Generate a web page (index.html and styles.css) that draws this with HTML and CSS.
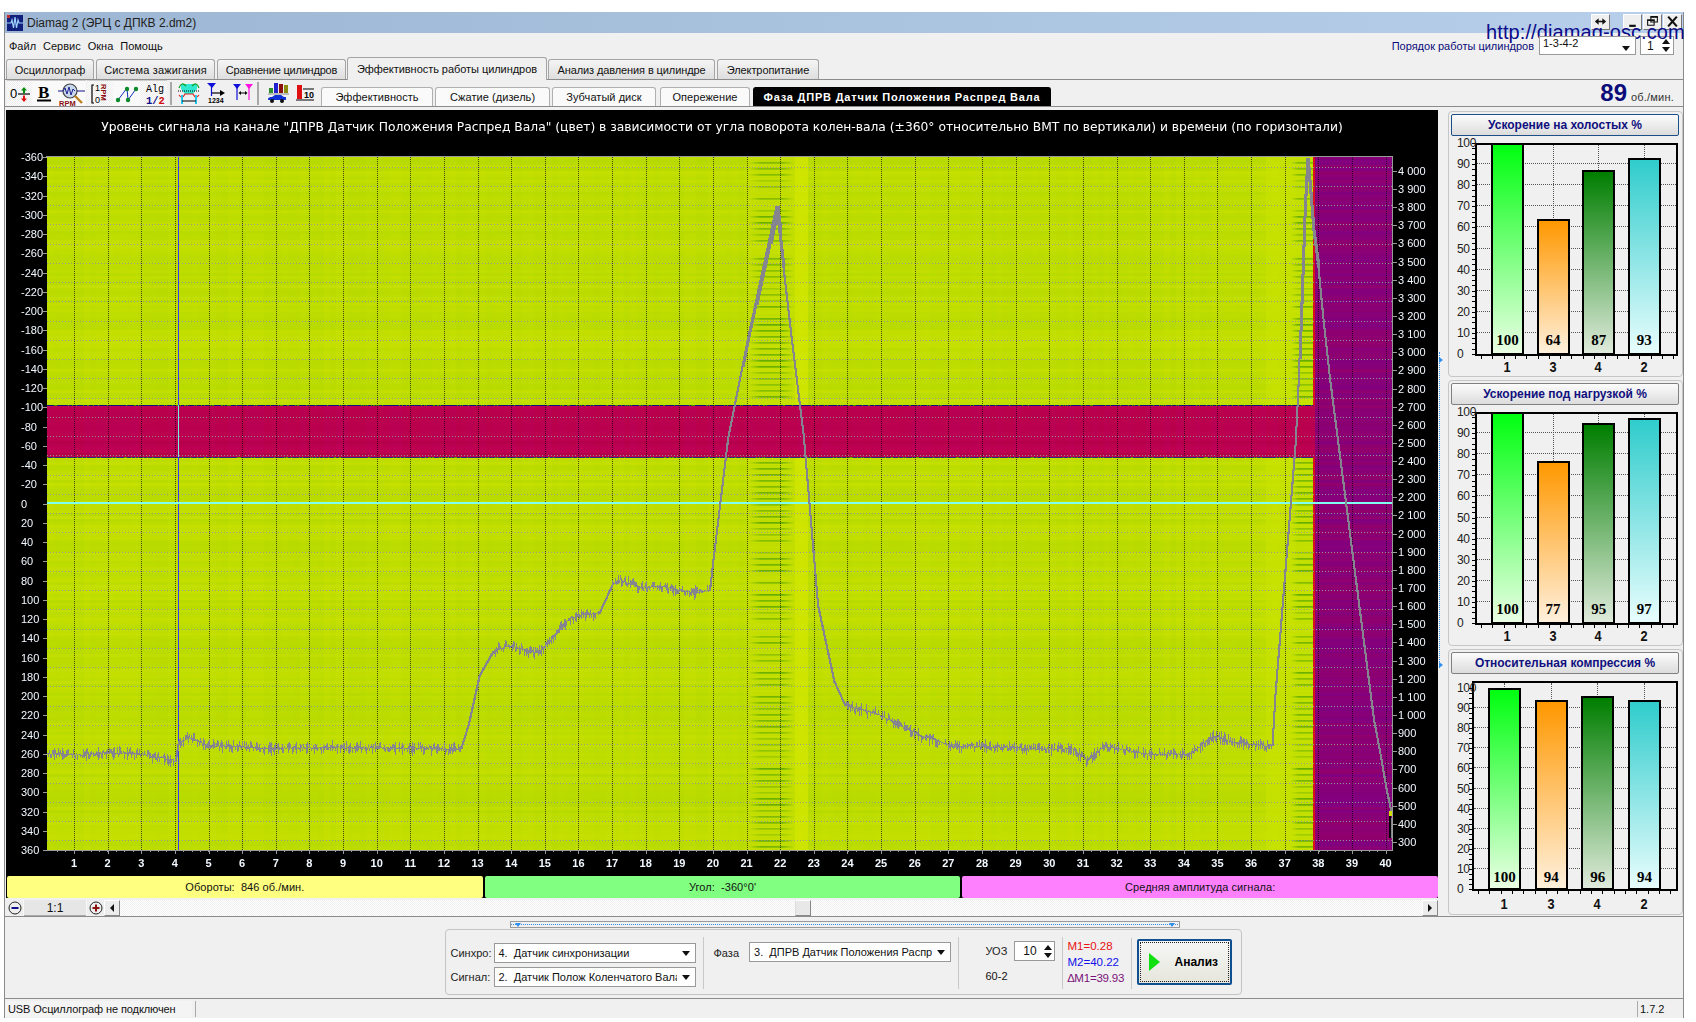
FILE: index.html
```html
<!DOCTYPE html>
<html lang="ru">
<head>
<meta charset="utf-8">
<title>Diamag 2</title>
<link rel="stylesheet" href="styles.css">
</head>
<body>
<div class="window">
  <header class="titlebar">
    <svg class="appicon" viewBox="0 0 16 16"><rect width="16" height="16" fill="#10207c"/><rect x="0" y="0" width="3" height="3" fill="#c03030"/><path d="M0 8h4l1-3 1.5 8L8 2l1.5 11L11 5l1 3h4" fill="none" stroke="#9fd0ff" stroke-width="1.2"/></svg>
    <span class="apptitle">Diamag 2 (ЭРЦ с ДПКВ 2.dm2)</span>
    <div class="winbtns">
      <button class="winbtn"><svg viewBox="0 0 14 12" class="wi"><path d="M2 6h10" stroke="#111" stroke-width="1.6"/><path d="M1 6l4-3.500v7zM13 6l-4-3.500v7z" fill="#111"/></svg></button>
      <span class="winbtn-gap"></span>
      <button class="winbtn"><svg viewBox="0 0 12 12" class="wi"><rect x="3" y="9" width="6" height="2" fill="#111"/></svg></button>
      <button class="winbtn"><svg viewBox="0 0 12 12" class="wi"><path d="M4.500 1.500h6v5h-6zM1.500 4.500h6v5h-6z" fill="#eee" stroke="#111"/><path d="M4 2h7M1 5h7" stroke="#111"/></svg></button>
      <button class="winbtn"><svg viewBox="0 0 12 12" class="wi"><path d="M2 1.500l8 9M10 1.500l-8 9" stroke="#111" stroke-width="2"/></svg></button>
    </div>
  </header>
  <div class="url">http://diamag-osc.com</div>

  <nav class="menubar">
    <ul class="menu"><li>Файл</li><li>Сервис</li><li>Окна</li><li>Помощь</li></ul>
    <div class="order">
      <span class="order-label">Порядок работы цилиндров</span>
      <div class="combo combo-order"><span class="combo-text">1-3-4-2</span><i class="caret"></i></div>
      <div class="spin spin-order"><span>1</span><span class="spin-arrows"><i class="up"></i><i class="down"></i></span></div>
    </div>
  </nav>

  <div class="tabs">
    <div class="tab t1">Осциллограф</div>
    <div class="tab t2">Система зажигания</div>
    <div class="tab t3">Сравнение цилиндров</div>
    <div class="tab t4 active">Эффективность работы цилиндров</div>
    <div class="tab t5">Анализ давления в цилиндре</div>
    <div class="tab t6">Электропитание</div>
  </div>

  <div class="toolbar">
    <div class="tool-group">
      <button class="tool hatch w25"><svg viewBox="0 0 26 24" class="ic"><text x="3" y="16" class="it">0</text><path d="M11 12h12" stroke="#000" stroke-width="1.200"/><path d="M17 5l3 3.500h-2v3h-2v-3h-2z" fill="#0a8a0a"/><path d="M17 20l3-3.500h-2v-3h-2v3h-2z" fill="#e01010"/></svg></button>
      <button class="tool w24"><svg viewBox="0 0 26 24" class="ic"><text x="7" y="16" class="ib">B</text><rect x="6" y="17.500" width="14" height="2" fill="#000"/></svg></button>
      <button class="tool w30"><svg viewBox="0 0 30 24" class="ic2"><circle cx="14" cy="9" r="7" fill="#c8d8ec" stroke="#444" stroke-width="1.200"/><path d="M2 9h5M21 9h8" stroke="#10108a" stroke-width="1.200"/><path d="M7 9l2-3 2 6 2-7 2 8 2-6 2 2" fill="none" stroke="#202090"/><path d="M19 14l7 7" stroke="#c08020" stroke-width="2.400"/><text x="3" y="23.500" class="irpm">RPM</text></svg></button>
    </div>
    <div class="tool-group">
      <button class="tool hatch w26"><svg viewBox="0 0 26 24" class="ic"><path d="M7 3H5v18h2" fill="none" stroke="#000" stroke-width="1.200"/><text x="8" y="9" class="it9">1</text><text x="8" y="21" class="it9">0</text><text transform="translate(14 2) rotate(90)" class="irpm">RPM</text></svg></button>
      <button class="tool w27"><svg viewBox="0 0 26 24" class="ic"><path d="M4 18l9-12 1 12 8-11" fill="none" stroke="#1030c0" stroke-width="1"/><circle cx="4" cy="18" r="2.200" fill="#0a8a2a"/><circle cx="13" cy="7" r="2.200" fill="#0a8a2a"/><circle cx="14" cy="18" r="2.200" fill="#0a8a2a"/><circle cx="22" cy="7" r="2.200" fill="#0a8a2a"/></svg></button>
      <button class="tool hatch w27"><svg viewBox="0 0 26 24" class="ic"><text x="5" y="10" class="it10">Alg</text><text x="5" y="22" class="it10b"><tspan fill="#10108a">1/</tspan><tspan fill="#d01010">2</tspan></text></svg></button>
    </div>
    <span class="tsep s-a"></span>
    <div class="tool-group plain">
      <button class="tool"><svg viewBox="0 0 26 24" class="ic"><path d="M5 3h16v5l-4 5H9L5 8z" fill="#30e8d0"/><path d="M3 7c2-5 4-5 7-2M23 7c-2-5-4-5-7-2" fill="none" stroke="#10a020" stroke-width="1.200"/><path d="M2 10h22" stroke="#000" stroke-dasharray="1 1"/><path d="M3 14c2 3 4 3 6-1l8 0c2 4 4 4 6 1" fill="none" stroke="#e02020" stroke-width="1.200"/><path d="M6 14v9M20 14v9" stroke="#20c8f0" stroke-width="2"/><path d="M6 20h14" stroke="#000"/></svg></button>
      <button class="tool"><svg viewBox="0 0 26 24" class="ic"><path d="M4 2h9l-4 5z" fill="#1010d8"/><path d="M8.500 5v10" stroke="#1010d8" stroke-width="1.200"/><path d="M9 12h10" stroke="#000" stroke-width="1.200"/><path d="M17 9l5 3-5 3z" fill="#000"/><text x="5" y="22" class="it8">1234</text></svg></button>
      <button class="tool"><svg viewBox="0 0 26 24" class="ic"><path d="M3 3h8l-4 5z" fill="#1010d8"/><path d="M7 6v13" stroke="#1010d8" stroke-width="1.200"/><path d="M15 3h8l-4 5z" fill="#ff10e0"/><path d="M19 6v13" stroke="#ff10e0" stroke-width="1.200"/><path d="M10 12h6" stroke="#000"/><path d="M8.500 12l2.500-2v4zM17.500 12l-2.500-2v4z" fill="#000"/></svg></button>
    </div>
    <span class="tsep s-b"></span>
    <div class="tool-group plain">
      <button class="tool"><svg viewBox="0 0 26 24" class="ic"><rect x="4" y="7" width="4" height="5" fill="#2f8f2f"/><rect x="9" y="2" width="4" height="10" fill="#2020d0"/><rect x="14" y="3" width="4" height="9" fill="#8a1010"/><rect x="19" y="4" width="4" height="8" fill="#8a8a10"/><path d="M3 13h21" stroke="#888"/><path d="M3 19c0-3 2-3 4-3l3-2h6l3 2h2v3z" fill="#1030d8"/><circle cx="7" cy="20" r="2" fill="#111"/><circle cx="17" cy="20" r="2" fill="#111"/></svg></button>
      <button class="tool"><svg viewBox="0 0 26 24" class="ic"><rect x="5" y="4" width="5" height="14" fill="#e01010"/><path d="M4 19h18M11 8h11" stroke="#000" stroke-width="1.200"/><text x="12" y="17" class="it9b">10</text></svg></button>
    </div>
    <div class="subtabs">
      <div class="subtab s1">Эффективность</div>
      <div class="subtab s2">Сжатие (дизель)</div>
      <div class="subtab s3">Зубчатый диск</div>
      <div class="subtab s4">Опережение</div>
      <div class="subtab s5 on">Фаза ДПРВ Датчик Положения Распред Вала</div>
    </div>
    <div class="rpm"><b>89</b><span>об./мин.</span></div>
  </div>

  <main class="main">
    <section class="scopepane">
      <div class="blackpanel">
        <div class="scope" id="scope">
          <canvas id="plot" width="1432" height="766"></canvas>
          <div class="scope-title">Уровень сигнала на канале "ДПРВ Датчик Положения Распред Вала" (цвет) в зависимости от угла поворота колен-вала (±360° относительно ВМТ по вертикали) и времени (по горизонтали)</div>
        </div>
        <div class="infobars">
          <div class="info yellow">Обороты:&nbsp; 846 об./мин.</div>
          <div class="info green">Угол:&nbsp; -360°0'</div>
          <div class="info pink">Средняя амплитуда сигнала:</div>
        </div>
      </div>
      <div class="scrollrow">
        <button class="zoombtn"><svg viewBox="0 0 14 14"><circle cx="7" cy="7" r="6" fill="#eee" stroke="#222"/><rect x="3.500" y="6" width="7" height="2" fill="#10108a"/></svg></button>
        <div class="ratio">1:1</div>
        <button class="zoombtn"><svg viewBox="0 0 14 14"><circle cx="7" cy="7" r="6" fill="#eee" stroke="#222"/><path d="M3.500 6H6V3.500h2V6h2.500v2H8v2.500H6V8H3.500z" fill="#8a1010"/></svg></button>
        <button class="sbtn"><i class="tri-l"></i></button>
        <div class="strack"><div class="sthumb"></div></div>
        <button class="sbtn"><i class="tri-r"></i></button>
      </div>
    </section>

    <div class="vsplit"><i class="va"></i><i class="va"></i></div>

    <aside class="side">
      <section class="group"><h3 class="gtitle first">Ускорение на холостых %</h3><div class="bchart" data-vals="100,64,87,93"></div></section>
      <section class="group"><h3 class="gtitle">Ускорение под нагрузкой %</h3><div class="bchart" data-vals="100,77,95,97"></div></section>
      <section class="group"><h3 class="gtitle">Относительная компрессия %</h3><div class="bchart tall" data-vals="100,94,96,94"></div></section>
    </aside>
  </main>

  <section class="bottom">
    <div class="hsplit"><i class="ha"></i><i class="ha"></i></div>
    <div class="panel">
      <div class="psec p1">
        <div class="prow"><label>Синхро:</label><div class="combo cw"><span class="combo-text">4.  Датчик синхронизации</span><i class="caret"></i></div></div>
        <div class="prow"><label>Сигнал:</label><div class="combo cw"><span class="combo-text">2.  Датчик Полож Коленчатого Вала</span><i class="caret"></i></div></div>
      </div>
      <div class="psec p2">
        <label>Фаза</label>
        <div class="combo cw"><span class="combo-text">3.  ДПРВ Датчик Положения Распред Вала</span><i class="caret"></i></div>
      </div>
      <div class="psec p3">
        <div class="uoz"><label>УОЗ</label><div class="spin spin-uoz"><span>10</span><span class="spin-arrows"><i class="up"></i><i class="down"></i></span></div></div>
        <div class="teeth">60-2</div>
      </div>
      <div class="psec p4">
        <div class="m1">M1=0.28</div>
        <div class="m2">M2=40.22</div>
        <div class="m3">∆M1=39.93</div>
      </div>
      <div class="psec p5">
        <button class="analyze"><i class="play"></i><span>Анализ</span></button>
      </div>
    </div>
  </section>

  <footer class="status">
    <div class="scell sc-a">USB Осциллограф не подключен</div>
    <div class="scell sc-b"></div>
    <div class="scell sc-c">1.7.2</div>
  </footer>
</div>
<script src="script.js"></script>
</body>
</html>
```

FILE: styles.css
```css
* { box-sizing: border-box; }
html, body { margin: 0; padding: 0; background: #fff; }
body { width: 1696px; height: 1022px; overflow: hidden; font: 11px "Liberation Sans", Arial, sans-serif; color: #111; }
button { font: inherit; margin: 0; padding: 0; }

.window { position: relative; margin: 12px 0 0 4px; width: 1680px; height: 1006px; background: #f0f0f0; display: flex; flex-direction: column; border-left: 1px solid #8a8a8a; border-right: 1px solid #8a8a8a; }

.titlebar { height: 21px; flex: none; display: flex; align-items: center; padding: 0 1px 0 2px; background: linear-gradient(90deg, #9cb6d3, #b7cfea); }
.appicon { width: 16px; height: 16px; flex: none; }
.apptitle { margin-left: 4px; font-size: 12px; color: #222; }
.winbtns { margin-left: auto; display: flex; margin-top: -2px; height: 16px; gap: 1px; }
.winbtn { width: 19px; height: 16px; background: #efefef; border: 1px solid #aaa; border-color: #fff #777 #777 #fff; }
.winbtn-gap { width: 11px; }
.wi { width: 13px; height: 13px; display: block; margin: 0 auto; }
.url { position: absolute; left: 1481px; top: 9px; font-size: 20px; color: #0b0b8a; white-space: nowrap; letter-spacing: .1px; }

.menubar { height: 23px; flex: none; display: flex; justify-content: space-between; align-items: flex-start; }
.menu { list-style: none; margin: 7px 0 0 4px; padding: 0; display: flex; gap: 7px; font-size: 11px; }
.order { display: flex; align-items: center; margin: 3px 9px 0 0; }
.order-label { color: #0b0b7a; font-size: 11px; margin-right: 5px; }
.combo { position: relative; display: flex; align-items: center; background: #fff; border: 1px solid #999; overflow: hidden; }
.combo-text { white-space: pre; overflow: hidden; flex: 1; padding-left: 4px; }
.caret { flex: none; width: 0; height: 0; margin: 0 5px 0 5px; border: 4px solid transparent; border-top: 5px solid #111; border-bottom: 0; }
.combo-order { width: 97px; height: 19px; align-items: flex-start; }
.combo-order .combo-text { padding-left: 3px; }
.combo-order .caret { margin-top: 9px; }
.spin { display: flex; align-items: center; justify-content: space-between; background: #fff; border: 1px solid #999; }
.spin-order { width: 34px; height: 19px; margin-left: 4px; padding: 0 3px 0 6px; font-size: 12px; }
.spin-arrows { display: flex; flex-direction: column; gap: 3px; }
.up, .down { display: block; width: 0; height: 0; border: 4px solid transparent; }
.up { border-bottom: 5px solid #111; border-top: 0; }
.down { border-top: 5px solid #111; border-bottom: 0; }

.tabs { height: 24px; flex: none; display: flex; align-items: flex-end; padding-left: 1px; gap: 2px; border-bottom: 1px solid #8c8c8c; font-size: 11px; letter-spacing: .15px; }
.tab { height: 20px; display: flex; align-items: center; justify-content: center; background: linear-gradient(#f5f5f5, #dedede); border: 1px solid #a5a5a5; border-bottom: 0; border-radius: 3px 3px 0 0; white-space: nowrap; }
.tab.active { height: 23px; background: #f0f0f0; margin-bottom: -1px; letter-spacing: -.05px; }
.t1 { width: 88px; letter-spacing: -.05px; } .t2 { width: 119px; } .t3 { width: 129px; letter-spacing: -.2px; } .t4 { width: 200px; margin-left: -1px; margin-right: -1px; } .t5 { width: 167px; letter-spacing: -.1px; } .t6 { width: 102px; letter-spacing: -.1px; }

.toolbar { height: 27px; flex: none; display: flex; align-items: flex-start; border-bottom: 1px solid #8c8c8c; padding-left: 2px; }
.tool-group { display: flex; height: 26px; }
.tool-group + .tool-group { margin-left: 1px; }
.tool { width: 27px; height: 26px; flex: none; border: 0; border-top: 1px solid #ccc; background: #f9f9f9; display: flex; align-items: center; justify-content: center; overflow: visible; }
.tool.hatch { background: repeating-conic-gradient(#fff 0 25%, #ececec 0 50%) 0 0 / 2px 2px; }
.w24 { width: 24px; } .w25 { width: 25px; } .w26 { width: 26px; } .w27 { width: 27px; } .w30 { width: 30px; }
.tool-group.plain .tool { background: transparent; border-top: 0; width: 27px; }
.ic { width: 26px; height: 24px; flex: none; overflow: visible; }
.ic2 { width: 30px; height: 24px; flex: none; }
.it { font: 13px "Liberation Sans", sans-serif; }
.ib { font: bold 17px "Liberation Serif", serif; }
.irpm { font: bold 7.500px "Liberation Sans", sans-serif; fill: #8a1010; }
.it9 { font: 9px "Liberation Sans", sans-serif; }
.it9b { font: bold 9px "Liberation Sans", sans-serif; }
.it8 { font: bold 7px "Liberation Sans", sans-serif; }
.it10 { font: 10px "Liberation Mono", monospace; }
.it10b { font: bold 10.500px "Liberation Mono", monospace; }
.tsep { width: 2px; height: 23px; margin-top: 2px; background: #a8a8a8; flex: none; }
.s-a { margin-left: 3px; margin-right: 3px; }
.s-b { margin-left: 1px; margin-right: 5px; }
.subtabs { display: flex; gap: 2px; margin: 7px 0 0 3px; font-size: 11px; letter-spacing: .05px; }
.subtab { height: 19px; display: flex; align-items: center; justify-content: center; background: #fafafa; border: 1px solid #b0b0b0; border-bottom: 0; border-radius: 3px 3px 0 0; white-space: nowrap; }
.s1 { width: 112px; } .s2 { width: 115px; } .s3 { width: 104px; } .s4 { width: 90px; margin-left: 2px; } .s5 { width: 298px; margin-left: 1px; }
.subtab.on { background: #000; color: #fff; font-weight: bold; letter-spacing: .8px; border-color: #000; }
.rpm { margin-left: auto; margin-right: 9px; display: flex; align-items: baseline; gap: 4px; color: #333; font-size: 11px; letter-spacing: .2px; }
.rpm b { font-size: 24px; line-height: 26px; color: #0b0b7a; letter-spacing: 0; }

.main { height: 810px; flex: none; display: flex; border-bottom: 1px solid #8c8c8c; padding: 3px 0 0 1px; }
.scopepane { width: 1432px; flex: none; display: flex; flex-direction: column; }
.blackpanel { background: #000; height: 788px; flex: none; }
.scope { position: relative; height: 766px; }
#plot { display: block; }
.scope-title { position: absolute; left: 0; right: 0; top: 10px; text-align: center; color: #fff; font: 12.300px "DejaVu Sans", Verdana, sans-serif; white-space: nowrap; }
.ax { position: absolute; white-space: nowrap; color: #f2f8ff; font-size: 11px; line-height: 12px; }
.ax-x { font-weight: bold; transform: translateX(-50%); }
.infobars { display: flex; gap: 2px; height: 22px; padding-left: 1px; }
.info { flex: 1; display: flex; align-items: center; justify-content: center; border-radius: 2px; font-size: 11px; letter-spacing: .05px; }
.yellow { background: #ffff80; } .green { background: #80ff80; } .pink { background: #ff80ff; }

.scrollrow { height: 16px; margin-top: 2px; display: flex; align-items: stretch; background: repeating-conic-gradient(#fff 0 25%, #f0f0f0 0 50%) 0 0 / 2px 2px; }
.zoombtn { width: 17px; height: 16px; background: #eee; border: 0; display: flex; align-items: center; justify-content: center; }
.zoombtn svg { width: 14px; height: 14px; }
.ratio { width: 62px; margin: 0 1px; display: flex; align-items: center; justify-content: center; background: #e6e6e6; border-bottom: 1px solid #aaa; font-size: 12px; }
.sbtn { width: 16px; height: 16px; background: #ececec; border: 1px solid #bbb; border-color: #fff #888 #888 #fff; display: flex; align-items: center; justify-content: center; }
.tri-l { border: 4px solid transparent; border-right: 4px solid #111; border-left: 0; }
.tri-r { border: 4px solid transparent; border-left: 4px solid #111; border-right: 0; }
.strack { flex: 1; position: relative; }
.sthumb { position: absolute; left: 675px; top: 0; width: 16px; height: 16px; background: #e8e8e8; border: 1px solid #999; border-color: #fff #888 #888 #ddd; }

.vsplit { width: 7px; flex: none; margin: 242px 0 0 1px; height: 316px; border-left: 1px dotted #2f8fef; display: flex; flex-direction: column; justify-content: space-between; padding-top: 5px; background: #f0f0f0; }
.va { display: block; width: 0; height: 0; border: 3px solid transparent; border-left: 4px solid #2f8fef; border-right: 0; margin-left: -1px; }

.side { width: 235px; flex: none; margin: 1px 0 0 2px; display: flex; flex-direction: column; gap: 3px; }
.group { height: 266px; flex: none; border: 1px solid #c6c6c6; border-radius: 4px; padding: 2px; position: relative; }
.gtitle { margin: 0; height: 22px; width: 228px; display: flex; align-items: center; justify-content: center; font-size: 12px; font-weight: bold; color: #10107e; background: linear-gradient(#fcfcfc, #dcdcdc); border: 1px solid #808080; border-radius: 2px; }
.gtitle.first { border-color: #1c4f87; }

.bchart { position: relative; height: 235px; }
.plotbox { position: absolute; left: 24px; top: 7px; width: 203px; height: 213px; border: 2px solid #000; background: #f0f0f0; }
.bchart.tall .plotbox { left: 21px; top: 7px; width: 206px; height: 210px; }
.gl-h { position: absolute; left: 0; right: 0; border-top: 1px dotted #555; }
.gl-v { position: absolute; top: 0; bottom: 0; border-left: 1px dotted #555; }
.bar { position: absolute; bottom: 0; width: 33px; border: 1px solid #000; border-width: 2px 2px 1px; display: flex; align-items: flex-end; justify-content: center; padding-bottom: 2px; font: bold 15px/22px "Liberation Serif", serif; color: #000; }
.bchart.tall .bar { padding-bottom: 0; }
.bar.c0 { background: linear-gradient(#00ff10, #eaffe4); }
.bar.c1 { background: linear-gradient(#ff9800, #fff0dc); }
.bar.c2 { background: linear-gradient(#007e00, #dfeadb); }
.bar.c3 { background: linear-gradient(#30cccc, #e8fdfd); }
.bl-y { position: absolute; left: 6px; font-size: 12px; line-height: 12px; letter-spacing: -.3px; color: #222; }
.bl-x { position: absolute; font: bold 15px/16px "Liberation Sans", sans-serif; color: #111; transform: translateX(-50%) scaleX(.85); }
.tk-y { position: absolute; width: 3px; height: 1px; background: #000; }
.tk-x { position: absolute; width: 1px; height: 4px; background: #000; }

.bottom { height: 82px; flex: none; border-bottom: 1px solid #8c8c8c; display: flex; flex-direction: column; align-items: center; }
.hsplit { width: 670px; height: 7px; margin: 4px 0 1px 1px; border: 1px solid #9a9a9a; display: flex; justify-content: space-between; align-items: center; padding: 0 4px; background: #f0f0f0 linear-gradient(90deg, #2f8fef 50%, transparent 50%) 0 2px / 2px 1px repeat-x; }
.ha { display: block; border: 3px solid transparent; border-top: 4px solid #2f8fef; border-bottom: 0; }
.panel { width: 797px; height: 66px; margin-left: -2px; border: 1px solid #c4c4c4; border-radius: 4px; display: flex; font-size: 11px; }
.psec { border-right: 1px solid #c8c8c8; margin: 7px 0 5px; flex: none; }
.psec label { color: #222; }
.p1 { width: 258px; padding: 6px 0 0 5px; display: flex; flex-direction: column; gap: 4px; }
.prow { display: flex; align-items: center; justify-content: space-between; padding-right: 7px; }
.cw { width: 202px; height: 20px; }
.p2 { width: 255px; display: flex; align-items: flex-start; gap: 10px; padding: 5px 0 0 10px; }
.p2 label { margin-top: 5px; }
.p3 { width: 104px; padding: 4px 0 0 27px; }
.uoz { display: flex; align-items: center; gap: 7px; }
.spin-uoz { width: 41px; height: 20px; padding: 0 2px 0 8px; font-size: 12px; }
.teeth { margin-top: 9px; }
.p4 { width: 69px; padding: 0 0 0 5px; font-size: 11.500px; line-height: 16px; margin-top: 8px; }
.m1 { color: #e81010; } .m2 { color: #1010e8; } .m3 { color: #7a107a; letter-spacing: -.2px; }
.p5 { border: 0; padding: 2px 0 0 5px; }
.analyze { width: 95px; height: 46px; display: flex; align-items: center; padding: 0 0 0 10px; background: linear-gradient(#f6f6f6, #e6e6dc); border: 2px solid #0f4f8f; border-radius: 2px; outline: 1px dotted #222; outline-offset: -4px; font-weight: bold; font-size: 12px; }
.play { flex: none; border: 9px solid transparent; border-left: 11px solid #10e010; border-right: 0; }
.analyze span { margin-left: 15px; }

.status { height: 19px; flex: none; display: flex; gap: 2px; padding: 2px 0 0 0; }
.scell { height: 16px; display: flex; align-items: center; }
.sc-a { width: 187px; padding-left: 3px; background: #f4f4f4; letter-spacing: -.1px; }
.sc-b { width: 1440px; border-left: 1px solid #aaa; margin-left: 1px; }
.sc-c { flex: 1; padding-left: 2px; border-left: 1px solid #aaa; }
```

FILE: script.js
```js
(function () {
  var scope = document.getElementById('scope');
  var cv = document.getElementById('plot');
  var ctx = cv.getContext('2d');
  ctx.translate(-6, -110);

  var seed = 12345;
  function rnd() { seed = (seed * 1664525 + 1013904223) >>> 0; return seed / 4294967296; }

  var L = 47, T = 157, R = 1392, B = 850, K = 1696 / 1568;
  function xOf(n) { return 74 + (n - 1) * 33.63; }
  function yOf(v) { return 503.5 + 0.9625 * v; }
  function yRpm(v) { return 842 - (v - 300) * 0.1814; }

  ctx.fillStyle = '#000';
  ctx.fillRect(6, 110, 1432, 766);

  var rowN = [], colN = [], stripe = [], i, v = 0, w = 0, last = 0;
  for (i = T; i <= B; i++) {
    if (i % 3 === 0) v = rnd() * 2 - 1;
    rowN[i] = v;
    if (i % 6 === 0) {
      last = rnd() < .85 ? .35 + rnd() * .65 : 0;
      stripe[i] = last;
    } else if (i % 6 === 1) {
      stripe[i] = last * .7;
    } else {
      stripe[i] = rnd() * .06;
    }
  }
  for (i = L; i <= R; i++) {
    if (i % 6 === 0) w = rnd() * 2 - 1;
    colN[i] = w;
  }
  function mix(a, b, t) { return [a[0] + (b[0] - a[0]) * t, a[1] + (b[1] - a[1]) * t, a[2] + (b[2] - a[2]) * t]; }

  var img = ctx.createImageData(R - L, B - T);
  var d = img.data, x, y, p = 0;
  for (y = T; y < B; y++) {
    for (x = L; x < R; x++) {
      var c, n = rowN[y] * .45 + colN[x] * .16;
      if (x >= 1315) {
        c = [136 + rowN[y] * 8 + (y % 7 === 0 ? 6 : 0), 0, 118 - rowN[y] * 10];
      } else if (y >= 405 && y < 457) {
        c = [184 + rowN[y] * 6, 0, 78 + colN[x] * 4 + rowN[y] * 6];
      } else {
        c = [190 + n * 14, 221 + n * 6, 0];
        var s = 0;
        if (x > 748 && x < 794) s = Math.min(1, Math.min(x - 748, 794 - x) / 12);
        else if (x > 1290 && x < 1314) s = Math.min(1, (x - 1290) / 8);
        if (x >= 795 && x < 808) c = mix(c, [212, 232, 0], .7);
        if (x > 746 && x < 795) c = mix(c, [200, 224, 0], .6);
        if (x > 1265 && x < 1314) c = mix(c, [203, 228, 0], .6);
        if (s) c = mix(c, [100, 172, 0], s * stripe[y]);
      }
      d[p++] = c[0]; d[p++] = c[1]; d[p++] = c[2]; d[p++] = 255;
    }
  }
  ctx.putImageData(img, L - 6, T - 110);

  ctx.fillStyle = '#d81020';
  ctx.fillRect(1313, 157, 2, 248);
  ctx.fillRect(1313, 457, 2, 393);
  for (x = L; x < 1313; x++) {
    ctx.fillStyle = rnd() < .8 ? '#10107a' : '#3a8a00';
    ctx.fillRect(x, 405, 1, 1);
    ctx.fillStyle = rnd() < .8 ? '#2a2a7a' : '#4a9a00';
    ctx.fillRect(x, 457, 1, 1);
  }

  for (v = -350; v <= 350; v += 20) {
    ctx.fillStyle = 'rgba(150,150,150,.95)';
    y = Math.round(yOf(v));
    for (x = L; x < R; x += 3) ctx.fillRect(x, y, 1, 1);
  }
  for (i = 1; i <= 40; i++) {
    x = Math.round(xOf(i));
    ctx.fillStyle = 'rgba(10,10,10,.7)';
    for (y = T; y < B; y += 2) ctx.fillRect(x, y, 1, 1);
  }

  ctx.fillStyle = '#3838ff';
  ctx.fillRect(178, T, 1, B - T);
  ctx.fillStyle = '#70f0e0';
  ctx.fillRect(178, 405, 1, 52);
  ctx.fillStyle = '#7ffff0';
  ctx.fillRect(L, 502, R - L, 2);

  var pts = [[43,697],[70,698],[100,696],[130,697],[150,701],[161,704],[164,686],[175,682],[190,689],[250,692],[300,691],[400,692],[425,693],[432,670],[442,625],[455,602],[470,597],[497,604],[510,590],[525,572],[540,568],[553,567],[565,541],[572,536],[590,543],[610,542],[640,548],[655,546],[658,520],[672,404],[690.6,311],[716.5,191],[730.4,311],[741.8,404],[755,560],[770,630],[780,652],[810,660],[850,680],[880,690],[910,690],[960,693],[990,692],[1005,703],[1020,690],[1060,697],[1100,697],[1122,680],[1140,686],[1175,690],[1178,640],[1196.5,410],[1199,360],[1202,277],[1205,191],[1207.5,145],[1213,213],[1217.6,247],[1222,293],[1228,348],[1236,410],[1269,666],[1276,703],[1280.6,730],[1285,750]];
  function curveY(px) {
    var q = px / K;
    for (var k = 1; k < pts.length; k++) {
      if (q <= pts[k][0]) {
        var a = pts[k - 1], b = pts[k];
        return (a[1] + (b[1] - a[1]) * (q - a[0]) / (b[0] - a[0])) * K;
      }
    }
    return pts[pts.length - 1][1] * K;
  }
  ctx.fillStyle = '#85858f';
  var prev = curveY(L);
  for (x = L; x < 1391; x++) {
    var cy = curveY(x), slope = Math.abs(cy - prev);
    var flat = slope < 1.4;
    var up = flat ? Math.pow(rnd(), 2) * 7 : .6;
    var dn = flat ? Math.pow(rnd(), 2) * 7 : .6;
    var top = Math.min(prev, cy) - up;
    var bot = Math.max(prev, cy) + dn;
    var wid = flat ? 1 : 2;
    if (x > 735 && x < 776) wid = 2 + (x - 735) / 13;
    if (x >= 776 && x < 786) wid = 4 - (x - 776) / 4;
    if (x > 1298 && x < 1318) wid = 3;
    top = Math.max(T, top);
    ctx.fillRect(x, Math.round(top), Math.round(wid), Math.max(1, Math.round(bot - top)));
    prev = cy;
  }
  ctx.fillStyle = '#cfe000';
  ctx.fillRect(1389, 811, 3, 5);
  ctx.fillStyle = '#000';
  ctx.fillRect(1389, 816, 2, 22);
  ctx.fillStyle = '#85858f';
  ctx.fillRect(1391, 818, 1, 20);

  ctx.fillStyle = '#9a9a9a';
  ctx.fillRect(L - 1, T - 1, R - L + 2, 1);
  ctx.fillRect(L, B, R - L + 1, 1);
  ctx.fillRect(R, T, 1, B - T);
  for (v = -360; v <= 360; v += 20) ctx.fillRect(L - 4, Math.round(yOf(v)), 4, 1);
  for (v = 300; v <= 4000; v += 100) ctx.fillRect(R + 1, Math.round(yRpm(v)), 4, 1);
  for (x = L + 10; x < R; x += 8.41) ctx.fillRect(Math.round(x), B + 1, 1, 1);
  for (i = 1; i <= 40; i++) ctx.fillRect(Math.round(xOf(i)), B + 1, 1, 3);

  function label(cls, text, left, top) {
    var el = document.createElement('div');
    el.className = 'ax ' + cls;
    el.textContent = text;
    el.style.left = (left - 6) + 'px';
    el.style.top = (top - 110 - 6) + 'px';
    scope.appendChild(el);
  }
  for (v = -360; v <= 360; v += 20) label('', String(v), 21, yOf(v));
  for (v = 300; v <= 4000; v += 100) {
    var s = v >= 1000 ? Math.floor(v / 1000) + ' ' + ('00' + v % 1000).slice(-3) : String(v);
    label('', s, 1398, yRpm(v));
  }
  for (i = 1; i <= 40; i++) label('ax-x', String(i), xOf(i), 863);

  var names = [1, 3, 4, 2];
  Array.prototype.forEach.call(document.querySelectorAll('.bchart'), function (ch) {
    var vals = ch.getAttribute('data-vals').split(',').map(Number);
    var tall = ch.classList.contains('tall');
    var box = document.createElement('div');
    box.className = 'plotbox';
    ch.appendChild(box);
    var unit = tall ? 2.01 : 2.11, inner = tall ? 206 : 209;
    var first = 16, pitch = tall ? 46.67 : 45.6, plotLeft = tall ? 21 : 24, plotTop = 7;
    var k, el;
    for (k = 10; k <= 90; k += 10) {
      el = document.createElement('div');
      el.className = 'gl-h';
      el.style.bottom = (k * unit) + 'px';
      box.appendChild(el);
    }
    vals.forEach(function (val, idx) {
      var left = first + pitch * idx - 2;
      el = document.createElement('div');
      el.className = 'gl-v';
      el.style.left = (left + 16) + 'px';
      box.appendChild(el);
      var b = document.createElement('div');
      b.className = 'bar c' + idx;
      b.style.left = left + 'px';
      b.style.height = (val * unit) + 'px';
      b.textContent = val;
      box.appendChild(b);
      var xl = document.createElement('div');
      xl.className = 'bl-x';
      xl.style.left = (plotLeft + left + 18) + 'px';
      xl.style.top = (plotTop + inner + (tall ? 9 : 7)) + 'px';
      xl.textContent = names[idx];
      ch.appendChild(xl);
    });
    for (k = 0; k <= 100; k += 10) {
      el = document.createElement('div');
      el.className = 'bl-y';
      el.textContent = k;
      el.style.top = (plotTop + inner + 2 - k * unit - 6) + 'px';
      ch.appendChild(el);
    }
    for (k = 0; k <= 100; k += 2.5) {
      el = document.createElement('div');
      el.className = 'tk-y';
      el.style.left = (plotLeft - 3) + 'px';
      el.style.top = Math.round(plotTop + inner + 2 - k * unit) + 'px';
      ch.appendChild(el);
    }
    for (k = 6; k < 200; k += 11.3) {
      el = document.createElement('div');
      el.className = 'tk-x';
      el.style.left = Math.round(plotLeft + k) + 'px';
      el.style.top = (plotTop + inner + 3) + 'px';
      ch.appendChild(el);
    }
  });
})();
```
